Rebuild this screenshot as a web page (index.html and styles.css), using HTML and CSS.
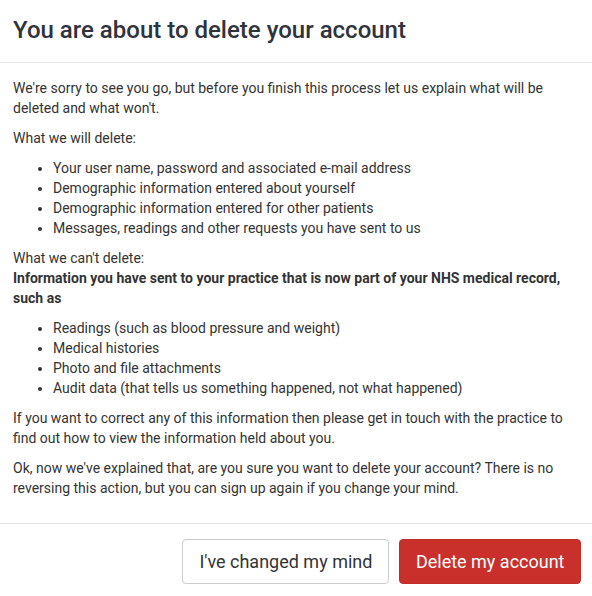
FILE: index.html
```html
<!DOCTYPE html>
<html>
<head>
<meta charset="utf-8">
<link rel="stylesheet" href="styles.css">
</head>
<body>
<div class="modal">
  <div class="modal-header">
    <h4 class="modal-title">You are about to delete your account</h4>
  </div>
  <div class="modal-body">
    <p>We're sorry to see you go, but before you finish this process let us explain what will be deleted and what won't.</p>
    <p>What we will delete:</p>
    <ul>
      <li>Your user name, password and associated e-mail address</li>
      <li>Demographic information entered about yourself</li>
      <li>Demographic information entered for other patients</li>
      <li>Messages, readings and other requests you have sent to us</li>
    </ul>
    <p>What we can't delete:<br><strong>Information you have sent to your practice that is now part of your NHS medical record, such as</strong></p>
    <ul>
      <li>Readings (such as blood pressure and weight)</li>
      <li>Medical histories</li>
      <li>Photo and file attachments</li>
      <li>Audit data (that tells us something happened, not what happened)</li>
    </ul>
    <p>If you want to correct any of this information then please get in touch with the practice to find out how to view the information held about you.</p>
    <p>Ok, now we've explained that, are you sure you want to delete your account? There is no reversing this action, but you can sign up again if you change your mind.</p>
  </div>
  <div class="modal-footer">
    <button class="btn btn-default">I've changed my mind</button>
    <button class="btn btn-danger">Delete my account</button>
  </div>
</div>
</body>
</html>
```
FILE: styles.css
```css
html, body {
  margin: 0;
  padding: 0;
  background: #fff;
}
body {
  font-family: Roboto, "Liberation Sans", sans-serif;
  font-size: 14px;
  line-height: 20px;
  color: #333;
}
.modal {
  width: 592px;
}
.modal-header {
  padding: 17px 13px 18px;
  border-bottom: 1px solid #e5e5e5;
}
.modal-title {
  margin: 0;
  font-size: 24px;
  line-height: 27px;
  font-weight: 500;
  color: #2f333b;
}
.modal-body {
  padding: 15px 13px;
}
.modal-body p {
  margin: 0 0 10px;
}
.modal-body ul {
  margin: 0 0 10px;
  padding-left: 40px;
}
.modal-body strong {
  font-weight: 700;
}
.modal-footer {
  border-top: 1px solid #e5e5e5;
  padding: 15px 11px 12px;
  display: flex;
  justify-content: flex-end;
  gap: 10px;
}
.btn {
  font-family: Roboto, "Liberation Sans", sans-serif;
  font-size: 18px;
  height: 45px;
  padding: 0 16px;
  border-radius: 4px;
  border: 1px solid transparent;
  cursor: pointer;
}
.btn-default {
  background: #fff;
  color: #333;
  border-color: #ccc;
}
.btn-danger {
  padding: 0 15.5px;
  background: #c9302c;
  color: #fff;
  border-color: #c12e2a;
}
```
